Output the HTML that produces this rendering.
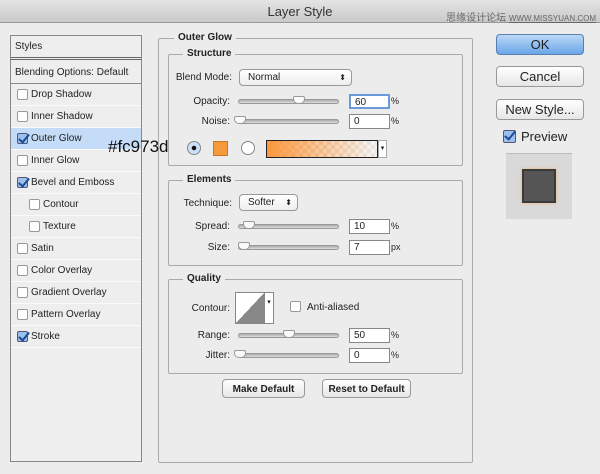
<!DOCTYPE html>
<html><head><meta charset="utf-8"><style>
*{margin:0;padding:0;box-sizing:border-box}
body{width:600px;height:474px;background:#ececec;font-family:"Liberation Sans","Noto Sans CJK SC",sans-serif;font-size:10px;color:#222;position:relative;overflow:hidden}
.a{position:absolute}
.title{left:0;top:0;width:600px;height:23px;background:linear-gradient(#e4e4e4,#c9c9c9);border-bottom:1px solid #999;text-align:center;font-size:13px;line-height:23px;color:#333}
.wm{right:4px;top:9px;font-size:10px;color:#666}
.left{left:10px;top:35px;width:132px;height:427px;border:1px solid #888;background:#eee}
.row{position:absolute;left:0;width:130px;height:22px;border-bottom:1px solid #fafafa;line-height:22px;padding-left:20px}
.cb{position:absolute;left:6px;top:5px;width:11px;height:11px;border:1px solid #999;border-radius:2px;background:#fff}
.cb.on::after{content:"";position:absolute;left:3px;top:-2px;width:4px;height:9px;border:solid #1a4a9a;border-width:0 2px 2px 0;transform:rotate(40deg)}
.cb.on{background:#9cc0ec;border-color:#557}
.fs{position:absolute;border:1px solid #aaa;border-radius:2px}
.lg{position:absolute;background:#ececec;padding:0 4px;font-weight:bold;font-size:10px;color:#222}
.lbl{position:absolute;text-align:right;width:90px;font-size:10px}
.sl{position:absolute;height:5px;border-radius:3px;background:linear-gradient(#aaa,#ddd);border:1px solid #999}
.th{position:absolute;width:12px;height:8px;background:#fafafa;border:1px solid #999;border-radius:2px 2px 5px 5px}
.inp{position:absolute;width:41px;height:15px;border:1px solid #888;background:#fff;font-size:10px;padding-left:4px;line-height:13px}
.pct{position:absolute;font-size:9px}
.sel{position:absolute;height:17px;border:1px solid #999;border-radius:4px;background:linear-gradient(#fff,#eee);padding-left:8px;line-height:15px;font-size:10px}
.btn{position:absolute;border:1px solid #999;border-radius:4px;background:linear-gradient(#fff,#e6e6e6);text-align:center;font-size:10px;font-weight:bold}
.rb{position:absolute;width:14px;height:14px;border-radius:50%;border:1px solid #888;background:#fff}
</style></head><body>
<div class="a title">Layer Style</div>
<div class="a wm">思缘设计论坛 <span style="font-size:8px;text-decoration:underline">WWW.MISSYUAN.COM</span></div>

<div class="a left">
<div class="row" style="top:0;height:24px;padding-left:4px;line-height:22px;border-bottom:3px double #666">Styles</div>
<div class="row" style="top:26px;height:22px;padding-left:4px;border-bottom:1px solid #888">Blending Options: Default</div>
<div class="row" style="top:48px"><span class="cb"></span>Drop Shadow</div>
<div class="row" style="top:70px"><span class="cb"></span>Inner Shadow</div>
<div class="row" style="top:92px;background:#c4dcf7"><span class="cb on"></span>Outer Glow</div>
<div class="row" style="top:114px"><span class="cb"></span>Inner Glow</div>
<div class="row" style="top:136px"><span class="cb on"></span>Bevel and Emboss</div>
<div class="row" style="top:158px;padding-left:32px"><span class="cb" style="left:18px"></span>Contour</div>
<div class="row" style="top:180px;padding-left:32px"><span class="cb" style="left:18px"></span>Texture</div>
<div class="row" style="top:202px"><span class="cb"></span>Satin</div>
<div class="row" style="top:224px"><span class="cb"></span>Color Overlay</div>
<div class="row" style="top:246px"><span class="cb"></span>Gradient Overlay</div>
<div class="row" style="top:268px"><span class="cb"></span>Pattern Overlay</div>
<div class="row" style="top:290px"><span class="cb on"></span>Stroke</div>
</div>

<div class="fs" style="left:158px;top:38px;width:315px;height:425px"></div>
<div class="lg" style="left:174px;top:32px">Outer Glow</div>

<div class="fs" style="left:168px;top:54px;width:295px;height:112px"></div>
<div class="lg" style="left:183px;top:48px">Structure</div>
<div class="lbl" style="left:142px;top:72px">Blend Mode:</div>
<div class="sel" style="left:239px;top:69px;width:113px">Normal<span style="position:absolute;right:5px;top:0;font-size:8px">⬍</span></div>
<div class="lbl" style="left:140px;top:96px">Opacity:</div>
<div class="sl" style="left:238px;top:99px;width:101px"></div><div class="th" style="left:293px;top:96px"></div>
<div class="inp" style="left:349px;top:94px;border:2px solid #6a9bd8">60</div><div class="pct" style="left:391px;top:96px">%</div>
<div class="lbl" style="left:140px;top:116px">Noise:</div>
<div class="sl" style="left:238px;top:119px;width:101px"></div><div class="th" style="left:234px;top:116px"></div>
<div class="inp" style="left:349px;top:114px">0</div><div class="pct" style="left:391px;top:116px">%</div>
<div class="a" style="left:108px;top:137px;font-size:17px;color:#111;font-family:'Liberation Sans',sans-serif">#fc973d</div>
<div class="rb" style="left:187px;top:141px;background:radial-gradient(#111 2px,#cde0f7 2.5px)"></div>
<div class="a" style="left:213px;top:141px;width:15px;height:15px;background:#f5993b;border:1px solid #c9772a"></div>
<div class="rb" style="left:241px;top:141px"></div>
<div class="a" style="left:266px;top:140px;width:112px;height:18px;border:1px solid #222;background:linear-gradient(90deg,#fc973d,rgba(252,151,61,0.5) 50%,rgba(240,240,240,0.6)),repeating-conic-gradient(#ddd 0 25%,#fff 0 50%) 0 0/8px 8px"></div>
<div class="a" style="left:378px;top:140px;width:9px;height:18px;border:1px solid #aaa;background:#fff;font-size:7px;text-align:center;line-height:16px">▾</div>

<div class="fs" style="left:168px;top:180px;width:295px;height:86px"></div>
<div class="lg" style="left:183px;top:174px">Elements</div>
<div class="lbl" style="left:142px;top:198px">Technique:</div>
<div class="sel" style="left:239px;top:194px;width:59px">Softer<span style="position:absolute;right:5px;top:0;font-size:8px">⬍</span></div>
<div class="lbl" style="left:140px;top:221px">Spread:</div>
<div class="sl" style="left:238px;top:224px;width:101px"></div><div class="th" style="left:243px;top:221px"></div>
<div class="inp" style="left:349px;top:219px">10</div><div class="pct" style="left:391px;top:221px">%</div>
<div class="lbl" style="left:140px;top:242px">Size:</div>
<div class="sl" style="left:238px;top:245px;width:101px"></div><div class="th" style="left:238px;top:242px"></div>
<div class="inp" style="left:349px;top:240px">7</div><div class="pct" style="left:391px;top:242px">px</div>

<div class="fs" style="left:168px;top:279px;width:295px;height:95px"></div>
<div class="lg" style="left:183px;top:273px">Quality</div>
<div class="lbl" style="left:140px;top:303px">Contour:</div>
<div class="a" style="left:235px;top:292px;width:30px;height:32px;border:1px solid #888;background:linear-gradient(to top left,#888 50%,#fff 50%)"></div>
<div class="a" style="left:265px;top:292px;width:9px;height:32px;border:1px solid #888;border-left:none;background:#fff;font-size:7px;text-align:center;line-height:20px">▾</div>
<div class="a" style="left:290px;top:301px;width:11px;height:11px;border:1px solid #999;border-radius:2px;background:#fff"></div>
<div class="a" style="left:307px;top:302px">Anti-aliased</div>
<div class="lbl" style="left:140px;top:330px">Range:</div>
<div class="sl" style="left:238px;top:333px;width:101px"></div><div class="th" style="left:283px;top:330px"></div>
<div class="inp" style="left:349px;top:328px">50</div><div class="pct" style="left:391px;top:330px">%</div>
<div class="lbl" style="left:140px;top:350px">Jitter:</div>
<div class="sl" style="left:238px;top:353px;width:101px"></div><div class="th" style="left:234px;top:350px"></div>
<div class="inp" style="left:349px;top:348px">0</div><div class="pct" style="left:391px;top:350px">%</div>

<div class="btn" style="left:222px;top:379px;width:83px;height:19px;line-height:19px">Make Default</div>
<div class="btn" style="left:322px;top:379px;width:89px;height:19px;line-height:19px">Reset to Default</div>

<div class="btn" style="left:496px;top:34px;width:88px;height:21px;line-height:19px;font-size:13px;font-weight:normal;background:linear-gradient(#bcd8f6,#6aa6e8);border-color:#5a7fb0">OK</div>
<div class="btn" style="left:496px;top:66px;width:88px;height:21px;line-height:19px;font-size:13px;font-weight:normal">Cancel</div>
<div class="btn" style="left:496px;top:99px;width:88px;height:21px;line-height:19px;font-size:13px;font-weight:normal">New Style...</div>
<div class="cb on" style="position:absolute;left:503px;top:130px;width:13px;height:13px"></div>
<div class="a" style="left:521px;top:129px;font-size:13px">Preview</div>
<div class="a" style="left:506px;top:153px;width:66px;height:66px;background:#d9d9d9;border-top:1px solid #bbb"></div>
<div class="a" style="left:522px;top:169px;width:34px;height:34px;background:#555;border:2px solid #3a3a3a;box-shadow:0 0 3px #f0b070"></div>
</body></html>
